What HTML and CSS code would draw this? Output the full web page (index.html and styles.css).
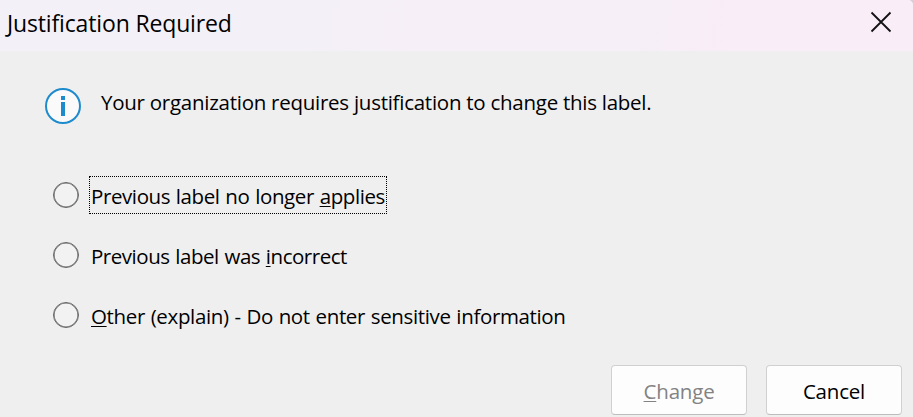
FILE: index.html
```html
<!DOCTYPE html>
<html lang="en">
<head>
  <meta charset="UTF-8">
  <meta name="viewport" content="width=device-width, initial-scale=1.0">
  <title>Justification Required</title>
  <link rel="stylesheet" href="styles.css">
</head>
<body>
  <div class="dialog">
    <header class="title-bar">
      <h1 class="title">Justification Required</h1>
      <button class="close" aria-label="Close">
        <svg width="22" height="22" viewBox="0 0 22 22" fill="none" stroke="#111" stroke-width="1.8">
          <path d="M1.5 1.5L20.5 20.5M20.5 1.5L1.5 20.5"/>
        </svg>
      </button>
    </header>

    <main class="content">
      <div class="message">
        <svg class="info-icon" width="36" height="36" viewBox="0 0 36 36">
          <circle cx="18" cy="18" r="17" fill="#fafafa" stroke="#1e8bcd" stroke-width="2"/>
          <path d="M16 8h4v4h-4zM16 14h4v14h-4z" fill="#1e8bcd"/>
        </svg>
        <p class="message-text">Your organization requires justification to change this label.</p>
      </div>

      <div class="options">
        <label class="option">
          <input type="radio" name="reason">
          <span class="option-text focused">Previous label no longer <u>a</u>pplies</span>
        </label>
        <label class="option">
          <input type="radio" name="reason">
          <span class="option-text incorrect">Previous label was <u>i</u>ncorrect</span>
        </label>
        <label class="option">
          <input type="radio" name="reason">
          <span class="option-text other"><u>O</u>ther (explain) - Do not enter sensitive information</span>
        </label>
      </div>
    </main>

    <footer class="actions">
      <button class="btn" disabled><u>C</u>hange</button>
      <button class="btn">Cancel</button>
    </footer>
  </div>
</body>
</html>
```
FILE: styles.css
```css
* {
  box-sizing: border-box;
}

body {
  margin: 0;
  background: #d5ced3;
  font-family: "Segoe UI", "Open Sans", sans-serif;
  font-size: 20.5px;
  letter-spacing: -0.26px;
  color: #000;
}

.dialog {
  width: 913px;
  height: 417px;
  background: #efefef;
  border-top-right-radius: 5px;
  overflow: hidden;
}

.title-bar {
  display: flex;
  align-items: flex-start;
  justify-content: space-between;
  height: 51px;
  padding: 0 21px 0 7px;
  background: linear-gradient(100deg, #f4f0f8 0%, #f4f0f8 35%, #f6eff7 45%, #f6eff7 70%, #f9edf7 80%, #f9edf7 100%);
}

.title {
  margin: 0;
  padding-top: 4px;
  font-size: 23px;
  font-weight: 400;
  letter-spacing: -0.15px;
  line-height: 38px;
  white-space: nowrap;
}

.close {
  padding: 11px 0 0;
  border: 0;
  background: none;
}

.close svg {
  display: block;
}

.content {
  height: 314px;
  padding: 37px 0 0 45px;
}

.message {
  display: flex;
  gap: 20px;
}

.message-text {
  margin: 0;
  line-height: 28px;
  white-space: nowrap;
}

.options {
  display: flex;
  flex-direction: column;
  gap: 22px;
  margin-top: 52px;
  padding-left: 8px;
}

.option {
  display: flex;
  align-items: flex-start;
  gap: 10px;
}

.option input {
  appearance: none;
  width: 26px;
  height: 26px;
  margin: 6px 0 0;
  border: 1px solid #666;
  border-radius: 50%;
  background: #f2f2f2;
  box-shadow: inset 0 0 0 0.6px #666;
}

.option-text {
  height: 38px;
  padding: 0 1px;
  border: 1px solid transparent;
  line-height: 38px;
  white-space: nowrap;
}

.option-text.focused {
  border: 1px dotted #000;
  letter-spacing: -0.4px;
  word-spacing: 0.8px;
}

.option-text.incorrect {
  letter-spacing: -0.46px;
  word-spacing: 0.8px;
}

.option-text.other {
  letter-spacing: -0.36px;
  word-spacing: 0.8px;
}

u {
  text-decoration-thickness: 1px;
  text-underline-offset: 2px;
  text-decoration-skip-ink: none;
}

.actions {
  display: flex;
  justify-content: flex-end;
  gap: 19px;
  padding-right: 11px;
}

.btn {
  width: 136px;
  height: 50px;
  padding: 2px 0 0;
  border: 1px solid #d0d0d0;
  border-bottom-color: #bdbdbd;
  border-radius: 4px;
  background: #fdfdfd;
  font: inherit;
  letter-spacing: -0.2px;
  color: #000;
}

.btn:disabled {
  color: #838383;
}
```
